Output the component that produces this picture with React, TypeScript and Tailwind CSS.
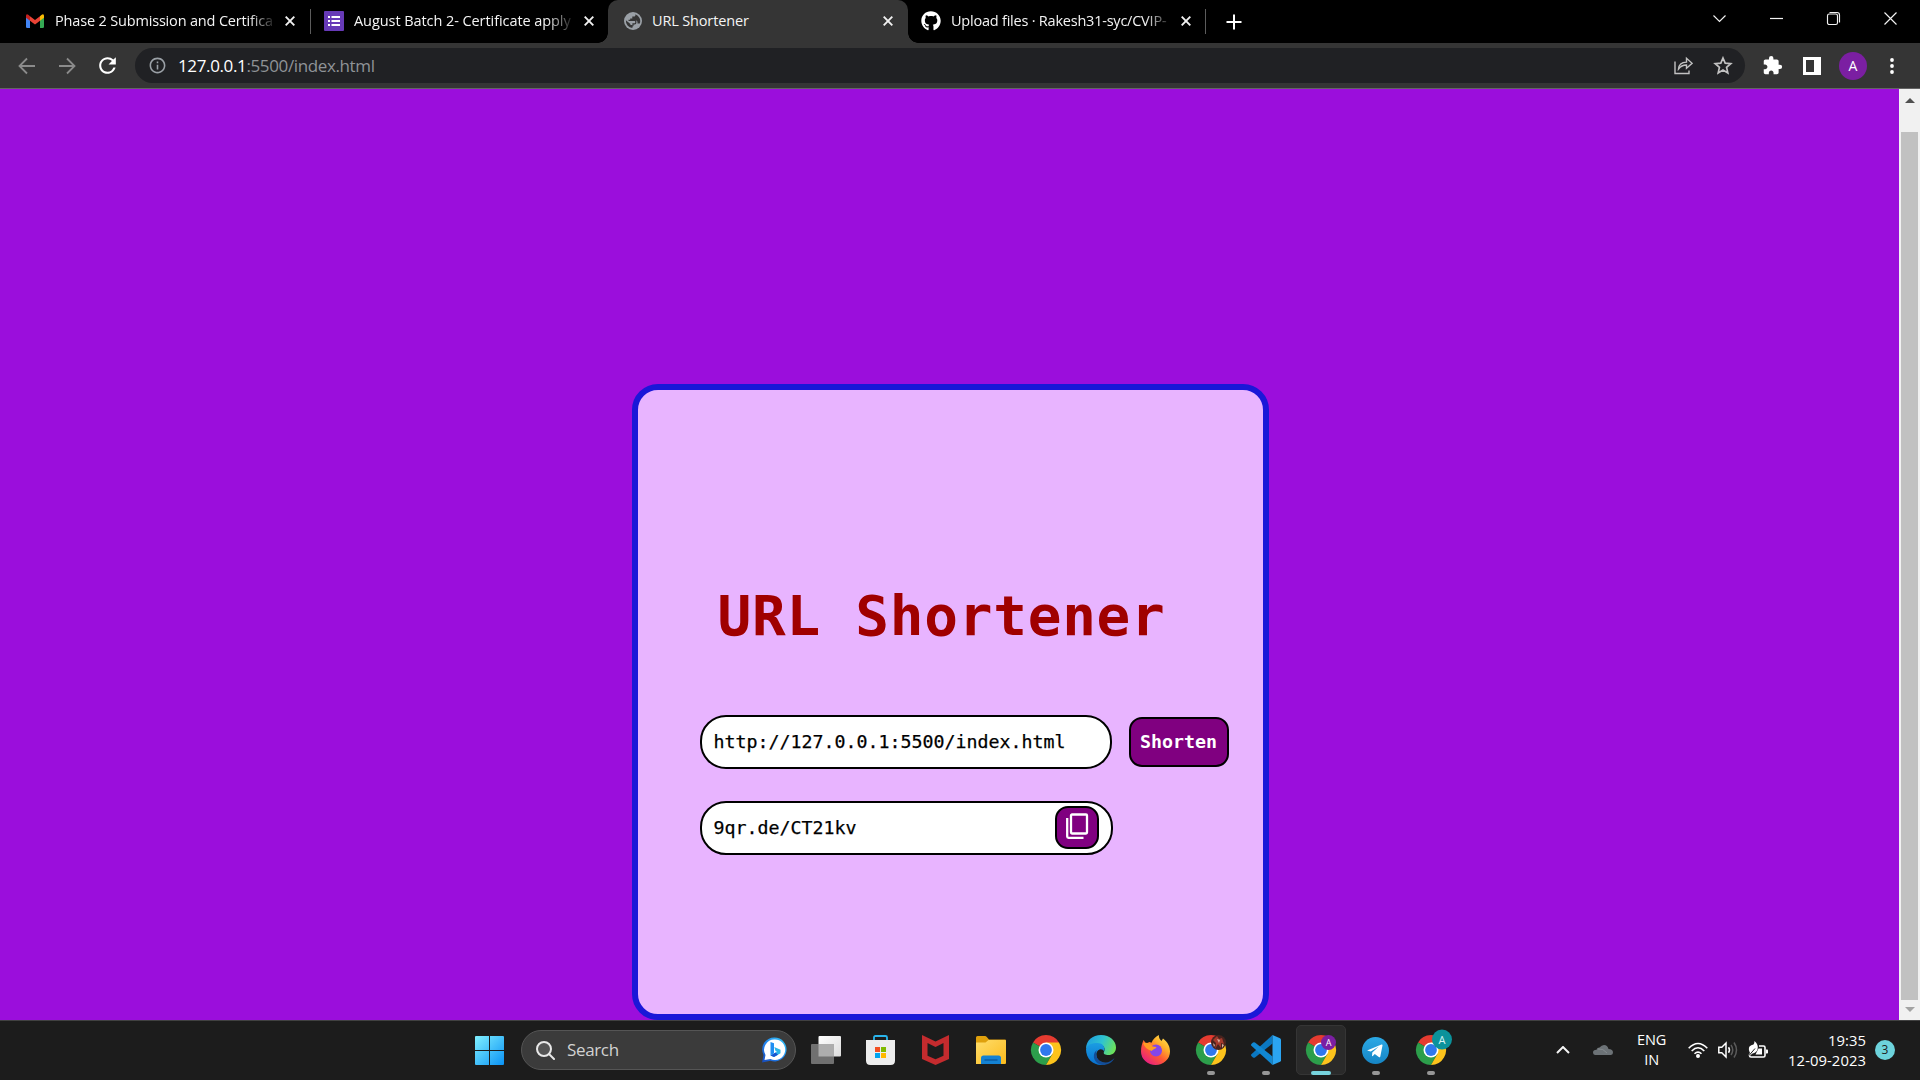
import type { ReactNode } from "react";
import { FaGithub } from "react-icons/fa";
import { MdExtension, MdInfoOutline, MdRefresh } from "react-icons/md";

const MONO = "font-['DejaVu_Sans_Mono',monospace]";
const FADE = "[mask-image:linear-gradient(to_right,black_calc(100%-28px),transparent)]";

function GmailIcon() {
  return (
    <svg width="18" height="14" viewBox="0 0 18 14" className="shrink-0">
      <path d="M0 2v10.8Q0 14 1.2 14H4V5Z" fill="#4285f4" />
      <path d="M18 2v10.8q0 1.2-1.2 1.2H14V5Z" fill="#34a853" />
      <path d="M14 2.2 15.400 .9Q18-.7 18 2v1.800L14 6.800Z" fill="#fbbc04" />
      <path d="M4 2.200 2.600 .9Q0-.7 0 2v1.800L4 6.800Z" fill="#c5221f" />
      <path d="M4 2.200 9 6l5-3.800V6.800L9 10.600 4 6.800Z" fill="#ea4335" />
    </svg>
  );
}

function FormsIcon() {
  return (
    <svg width="20" height="20" viewBox="0 0 20 20" className="shrink-0">
      <rect width="20" height="20" rx="1" fill="#673ab7" />
      <path d="M4 5h2v2H4zM4 9h2v2H4zM4 13h2v2H4zM7.500 5H16v2H7.500zM7.500 9H16v2H7.500zM7.500 13H16v2H7.500z" fill="#fff" />
    </svg>
  );
}

function GlobeIcon() {
  return (
    <svg width="18" height="18" viewBox="0 0 18 18" className="shrink-0">
      <circle cx="9" cy="9" r="9" fill="#9aa0a6" />
      <path d="M11.300 2.200q.5 1.800-.8 2.400H8.300v2H6.200v2H12q1.500 0 1.500 1.600v1.300h2.300A7.200 7.200 0 0 0 11.300 2.200Z" fill="#353535" />
      <path d="M1.900 8.300 6.400 12v1h2v3.100A7.200 7.200 0 0 1 1.900 8.300Z" fill="#353535" />
      <path d="M4.500 8.300h6.300q1 0 1 1.100v1.400q0 1-1 1H9v1.500q0 .8-.9.800" fill="none" stroke="#353535" strokeWidth="1.200" />
    </svg>
  );
}

function Cross() {
  return (
    <svg width="10" height="10" viewBox="0 0 10 10" className="shrink-0">
      <path d="m.7.700 8.600 8.600M9.300.7.700 9.300" stroke="#f1f1f1" strokeWidth="1.900" />
    </svg>
  );
}

function TabStrip() {
  const title = "whitespace-nowrap text-[14.5px] leading-[20px] text-[#f4f4f4]";
  return (
    <div className="flex h-[43px] shrink-0 items-center bg-black">
      <div className="flex h-full w-[310px] items-center pr-[15px] pl-[26px] pb-[2px]">
        <GmailIcon />
        <span className={`${title} ${FADE} ml-[11px] w-[222px] tracking-[-0.17px]`}>Phase 2 Submission and Certifica</span>
        <span className="ml-auto"><Cross /></span>
      </div>
      <div className="mb-[1px] h-[25px] w-px bg-[#5c5c5c]" />
      <div className="flex h-full w-[297px] items-center pr-[14px] pl-[13px] pb-[1px]">
        <FormsIcon />
        <span className={`${title} ${FADE} ml-[10px] w-[221px] tracking-[-0.07px]`}>August Batch 2- Certificate apply</span>
        <span className="ml-auto"><Cross /></span>
      </div>
      <div className="relative flex h-full w-[300px] items-center rounded-t-[10px] bg-[#353535] pr-[15px] pl-[16px] pb-[1px]">
        <span className="absolute bottom-0 -left-[10px] size-[10px] bg-[radial-gradient(circle_at_0_0,transparent_9.5px,#353535_10px)]" />
        <span className="absolute -right-[10px] bottom-0 size-[10px] bg-[radial-gradient(circle_at_100%_0,transparent_9.5px,#353535_10px)]" />
        <GlobeIcon />
        <span className={`${title} ml-[10px] tracking-[-0.15px]`}>URL Shortener</span>
        <span className="ml-auto"><Cross /></span>
      </div>
      <div className="flex h-full w-[297px] items-center pr-[14px] pl-[13px] pb-[1px]">
        <FaGithub size={20} color="#fff" className="shrink-0" />
        <span className={`${title} ${FADE} ml-[10px] w-[222px] tracking-[-0.22px]`}>Upload files · Rakesh31-syc/CVIP-</span>
        <span className="ml-auto"><Cross /></span>
      </div>
      <div className="mb-[1px] h-[25px] w-px bg-[#5c5c5c]" />
      <svg width="16" height="16" viewBox="0 0 16 16" className="ml-[20px]">
        <path d="M8 .5v15M.5 8h15" stroke="#fff" strokeWidth="2" />
      </svg>
      <div className="ml-auto flex h-full items-center pr-[1px] pb-[6px]">
        <WindowButton><path d="m1.500 4.500 6 6 6-6" /></WindowButton>
        <WindowButton><path d="M1 7.500h13" strokeWidth="1.200" /></WindowButton>
        <WindowButton>
          <rect x="1.500" y="3" width="10" height="10.500" rx="1.800" />
          <path d="M3.500 1.500h7.500q2.500 0 2.500 2.500v7.500" />
        </WindowButton>
        <WindowButton><path d="m1.500 1.500 12 12M13.500 1.500l-12 12" /></WindowButton>
      </div>
    </div>
  );
}

function WindowButton({ children }: { children: ReactNode }) {
  return (
    <div className="flex w-[57px] justify-center">
      <svg width="15" height="15" viewBox="0 0 15 15" fill="none" stroke="#f2f2f2" strokeWidth="1.150">{children}</svg>
    </div>
  );
}

function Toolbar() {
  return (
    <div className="flex h-[46px] shrink-0 items-center border-b border-[#646464] bg-[#353535]">
      <svg width="18" height="18" viewBox="0 0 18 18" fill="none" stroke="#8b8b8b" strokeWidth="1.800" className="ml-[18px]">
        <path d="M17 9H2M9 1.500 1.500 9 9 16.500" />
      </svg>
      <svg width="18" height="18" viewBox="0 0 18 18" fill="none" stroke="#8b8b8b" strokeWidth="1.800" className="ml-[22px]">
        <path d="M1 9h15M9 1.500 16.500 9 9 16.500" />
      </svg>
      <MdRefresh size={25} color="#fff" className="ml-[19px]" />
      <div className="ml-[15px] flex h-[35px] w-[1610px] items-center rounded-full bg-[#202124] pr-[11px] pl-[13px]">
        <MdInfoOutline size={19} color="#9aa0a6" />
        <span className="ml-[11px] text-[17px] tracking-[-0.37px] whitespace-nowrap text-[#8f9397]">
          <span className="text-white">127.0.0.1</span>:5500/index.html
        </span>
        <svg width="19" height="19" viewBox="0 0 19 19" fill="none" stroke="#c2c2c2" strokeWidth="1.400" className="ml-auto">
          <path d="M1 5.500v12h14v-3" />
          <path d="M4.500 13c.3-4.500 3-6.700 8-6.900V2.300l5.600 5-5.600 5V9c-3.500 0-6 1.300-8 4Z" />
        </svg>
        <svg width="20" height="19" viewBox="0 0 20 19" fill="none" stroke="#c2c2c2" strokeWidth="1.700" className="mr-[1px] ml-[20px]">
          <path d="m10 2 2.200 5.200 5.600.500-4.250 3.700 1.280 5.500L10 14l-4.830 2.900 1.280-5.500L2.200 7.700l5.600-.5Z" />
        </svg>
      </div>
      <MdExtension size={21} color="#fff" className="ml-[17px]" />
      <svg width="18" height="18" viewBox="0 0 18 18" className="ml-[20px]">
        <path d="M0 0h18v18H0zM3 3v12h8V3z" fill="#fff" fillRule="evenodd" />
      </svg>
      <div className="ml-[18px] flex size-[28px] items-center justify-center rounded-full bg-[#7b1fa2] text-[14px] text-white">A</div>
      <svg width="4" height="16" viewBox="0 0 4 16" className="ml-[23px]" fill="#fff">
        <circle cx="2" cy="2" r="1.900" /><circle cx="2" cy="8" r="1.900" /><circle cx="2" cy="14" r="1.900" />
      </svg>
    </div>
  );
}

function Scrollbar() {
  return (
    <div className="flex w-[21px] shrink-0 flex-col items-center bg-[#f1f1f1]">
      <svg width="10" height="5" viewBox="0 0 10 5" className="mt-[9px]"><path d="m0 5 5-5 5 5Z" fill="#505050" /></svg>
      <div className="mt-[29px] h-[868px] w-[17px] bg-[#c1c1c1]" />
      <svg width="10" height="5" viewBox="0 0 10 5" className="mt-[7px]"><path d="m0 0 5 5 5-5Z" fill="#a3a3a3" /></svg>
    </div>
  );
}

function ShortenerPage() {
  const field = "flex h-[54px] items-center rounded-[26px] border-2 border-black bg-white pl-[12px] text-[18.27px] text-black [-webkit-text-stroke:0.25px_black]";
  return (
    <main className="flex flex-1 justify-center overflow-hidden bg-[#9b0edc] pt-[294.500px] pl-[1px]">
      <section className={`${MONO} flex h-[636.500px] w-[637px] flex-col rounded-[26px] border-[6px] border-[#1a17d8] bg-[#e8b4ff]`}>
        <h1 className="mt-[190px] ml-[80px] text-[56px] leading-[72px] font-bold tracking-[0.75px] whitespace-nowrap text-[#a00000]">URL Shortener</h1>
        <div className="mt-[63px] ml-[62px] flex items-center">
          <div className={`${field} w-[412px]`}>http://127.0.0.1:5500/index.html</div>
          <button className="ml-[17px] h-[50px] w-[100px] rounded-[13px] border-2 border-black bg-[#800080] text-[18.27px] font-bold text-white">Shorten</button>
        </div>
        <div className={`${field} mt-[32px] ml-[62px] w-[413px] justify-between pr-[12px]`}>
          <span>9qr.de/CT21kv</span>
          <button className="flex h-[43px] w-[44px] items-center justify-center rounded-[13px] border-2 border-black bg-[#800080] pb-[3px]">
            <svg width="24" height="26" viewBox="0 0 24 26" fill="none" stroke="#fff" strokeWidth="2.300">
              <rect x="6" y="1.500" width="16" height="19" rx="1" />
              <path d="M2.200 5v18.500q0 1.300 1.300 1.300H18.500" />
            </svg>
          </button>
        </div>
      </section>
    </main>
  );
}

function Chrome({ children }: { children?: ReactNode }) {
  return (
    <svg width="30" height="30" viewBox="0 0 30 30" overflow="visible">
      <path d="M15 15 2 7.500A15 15 0 0 1 28 7.500Z" fill="#e53b30" />
      <path d="M15 15 2 7.500A15 15 0 0 0 15 30l6.500-11.250Z" fill="#2c9e4b" />
      <path d="M15 15V7.500h13A15 15 0 0 1 15 30l6.500-11.250Z" fill="#fcc31c" />
      <circle cx="15" cy="15" r="7.500" fill="#fff" />
      <circle cx="15" cy="15" r="5.900" fill="#2f78ed" />
      {children}
    </svg>
  );
}

function TaskItem({ children, mark = "none" }: { children: ReactNode; mark?: "none" | "running" | "active" }) {
  return (
    <div className="flex h-full w-[55px] items-center justify-center">
      <div className={`relative flex h-[50px] w-[50px] items-center justify-center rounded-[5px] ${mark === "active" ? "border border-[#353535] bg-[#2a2a2a]" : ""}`}>
        {children}
        {mark === "running" && <span className="absolute bottom-0 h-[4px] w-[8px] rounded-full bg-[#969696]" />}
        {mark === "active" && <span className="absolute -bottom-[1px] h-[4px] w-[20px] rounded-full bg-[#76d3dd]" />}
      </div>
    </div>
  );
}

function Taskbar() {
  return (
    <footer className="flex h-[60px] shrink-0 items-center border-t border-[#414141] bg-[#1c1c1c] pb-[1px] text-white">
      <svg width="29" height="29" viewBox="0 0 29 29" className="ml-[475px]">
        <defs>
          <linearGradient id="win" x1="0" y1="0" x2="29" y2="29" gradientUnits="userSpaceOnUse"><stop stopColor="#80f0ff" /><stop offset="1" stopColor="#0a92f5" /></linearGradient>
        </defs>
        <path d="M0 1q0-1 1-1h13v14H0zM15 0h13q1 0 1 1v13H15zM0 15h14v14H1q-1 0-1-1zM15 15h14v13q0 1-1 1H15z" fill="url(#win)" />
      </svg>
      <div className="ml-[17px] flex h-[40px] w-[275px] items-center rounded-full border border-[#555] bg-[#3b3b3b] pr-[8px] pl-[14px]">
        <svg width="19" height="19" viewBox="0 0 19 19" fill="none" stroke="#e8e8e8" strokeWidth="2">
          <circle cx="8" cy="8" r="7" fill="#555" /><path d="m13 13 5 5" strokeLinecap="round" />
        </svg>
        <span className="ml-[12px] text-[17px] tracking-[-0.35px] text-[#d2d2d2]">Search</span>
        <svg width="25" height="26" viewBox="0 0 25 26" className="ml-auto">
          <defs>
            <linearGradient id="bubble" x1="0" y1="1" x2="1" y2="0"><stop stopColor="#1748b8" /><stop offset=".45" stopColor="#2183ef" /><stop offset="1" stopColor="#35c8f4" /></linearGradient>
          </defs>
          <path d="M12.500.5a12 12 0 1 1-4 23.300L0 25.500 1.500 18A12 12 0 0 1 12.500.5Z" fill="url(#bubble)" />
          <path d="M12.500 2.500a10.300 10.300 0 1 1-4 19.600L2.500 23 3.500 18a10.300 10.300 0 0 1 9-15.500Z" fill="#fff" />
          <path d="m8.500 5 3.500 1.300v10l-3.500 2.200Z" fill="#1f8ef2" />
          <path d="m12.300 10 6.200 2.700v3.600L12 20l-3.500-1.500 6.500-3.700-1.500-.7Z" fill="#2bb5e8" />
          <path d="m8.500 18.500 5-3 2.500 2.300L12 20Z" fill="#1754d1" />
        </svg>
      </div>
      <div className="ml-[2px] flex h-full">
        <TaskItem>
          <svg width="30" height="30" viewBox="0 0 30 30">
            <defs><linearGradient id="pane" x2="1" y2="1"><stop stopColor="#fff" /><stop offset="1" stopColor="#dcdcdc" /></linearGradient></defs>
            <rect x="7.500" y="1" width="22.500" height="20.500" rx="1" fill="url(#pane)" />
            <rect x="0" y="9" width="23" height="20" rx="1" fill="#707070" />
            <path d="M7.500 9H23v12.500H7.500z" fill="#adadad" />
          </svg>
        </TaskItem>
        <TaskItem>
          <svg width="29" height="30" viewBox="0 0 29 30">
            <path d="M8 6V2.500Q8 1 9.500 1h10Q21 1 21 2.500V6" fill="none" stroke="#29b5ec" strokeWidth="1.800" />
            <path d="M0 5h29v20.500Q29 30 24.500 30h-20Q0 30 0 25.500Z" fill="#ededed" />
            <path d="M9 12h5v5H9z" fill="#f25022" /><path d="M15 12h5v5h-5z" fill="#7fba00" />
            <path d="M9 18h5v5H9z" fill="#00a4ef" /><path d="M15 18h5v5h-5z" fill="#ffb900" />
          </svg>
        </TaskItem>
        <TaskItem>
          <svg width="27" height="30" viewBox="0 0 27 30">
            <path d="m0 0 13.500 6.500L27 0v24l-13.500 6L0 24ZM5.500 8v12.700l8 3.600 8-3.600V8l-8 4Z" fill="#c42b2e" fillRule="evenodd" />
          </svg>
        </TaskItem>
        <TaskItem>
          <svg width="30" height="28" viewBox="0 0 30 28">
            <defs><linearGradient id="folder" x2="1" y2="1"><stop stopColor="#ffdd6b" /><stop offset="1" stopColor="#fbbb1c" /></linearGradient></defs>
            <path d="M0 1.500Q0 0 1.500 0H9q1 0 1.800 1L13 3.500H29q1 0 1 1V14H0Z" fill="#dfa00c" />
            <path d="M0 6.500h9.500L12.500 4H29q1 0 1 1v22q0 1-1 1H0Z" fill="url(#folder)" />
            <path d="M5 28v-6q0-2.500 2.500-2.500h15q2.500 0 2.500 2.500v6Z" fill="#1482d3" />
            <path d="M8.500 24h13" stroke="#0a559b" strokeWidth="1.300" />
          </svg>
        </TaskItem>
        <TaskItem><Chrome /></TaskItem>
        <TaskItem>
          <svg width="30" height="30" viewBox="0 0 30 30">
            <defs>
              <linearGradient id="edgeTop" y1=".3" x2="1" y2=".6"><stop stopColor="#1e9fe0" /><stop offset=".5" stopColor="#2fc3d0" /><stop offset="1" stopColor="#6ee257" /></linearGradient>
              <linearGradient id="edgeSide" x2="0" y2="1"><stop stopColor="#1b9de2" /><stop offset="1" stopColor="#0870cf" /></linearGradient>
            </defs>
            <path d="M0 14C0 5.500 6.500 0 15 0c9 0 15 6 15 12.500 0 5-3.500 7.500-7.500 7.500-3.500 0-5.500-1.300-4.500-3 2-4-1-8-6-8C6 9 1.500 11 0 14Z" fill="url(#edgeTop)" />
            <path d="M0 14c1.500-4.500 6-6 11.500-6 5.500 0 8 4.500 6.500 8.500-1-3.500-6.500-3-7.500 1.500-1 6 4 11 9 11.300C10 32 0 26 0 14Z" fill="url(#edgeSide)" />
            <path d="M11.500 15c-2 1-2.500 7 2 10.500 5 3.500 11 2 15-2.500-2 4.500-7 7-12 7-6-.5-9.500-6-8.500-10.500.5-2.500 2-4 3.500-4.500Z" fill="#134e98" />
          </svg>
        </TaskItem>
        <TaskItem>
          <svg width="29" height="30" viewBox="0 0 29 30">
            <defs>
              <linearGradient id="fox" x1="1" x2=".2" y2="1"><stop stopColor="#fff25a" /><stop offset=".35" stopColor="#ffb02a" /><stop offset=".62" stopColor="#ff5a32" /><stop offset="1" stopColor="#e5178a" /></linearGradient>
            </defs>
            <path d="M2.500 5 5 8.500 8.500 7l2 .8c1.500-3.500 4-6 7.300-7.800 0 3 1 4.500 2.700 6L22 3.500c5 4 7 8 7 13a14.500 13.500 0 0 1-29 0C0 12 1 8.500 2.500 5Z" fill="url(#fox)" />
            <circle cx="15" cy="15.500" r="6" fill="#8446e8" />
            <path d="M2 8c5-1 8 1 9.500 3.500l4 .5c-1 2.500-4 2-4.500 4-4-1-7-3-9-8Z" fill="#ff9b24" />
          </svg>
        </TaskItem>
        <TaskItem mark="running">
          <Chrome>
            <circle cx="22.500" cy="7.500" r="7.500" fill="#47231e" />
            <path d="m17 5 4-4 2 3 3-1 2 6-3-1v5l-3-4-3 5 1-6Z" fill="#a43a2c" />
            <path d="m21 4 3 1-1 3zM17 8l2 2-1 2zM26 9l2 1-2 3z" fill="#d9b2a0" />
          </Chrome>
        </TaskItem>
        <TaskItem mark="running">
          <svg width="30" height="30" viewBox="0 0 30 30">
            <path d="M21.500 0v8.500L4 22.500q-1 .7-2 0L.4 21q-.8-.9 0-1.800Z" fill="#0b78c2" />
            <path d="M21.500 30v-8.500L4 7.500q-1-.7-2 0L.4 9q-.8.900 0 1.800Z" fill="#1188d3" />
            <path d="M21.500 0 29 3.300q1 .5 1 1.500v20.400q0 1-1 1.500L21.500 30Z" fill="#2ba5f2" />
          </svg>
        </TaskItem>
        <TaskItem mark="active">
          <Chrome>
            <circle cx="22.500" cy="7.500" r="7.500" fill="#7b1fa2" />
            <text x="22.500" y="11" fontSize="9" fill="#fff" textAnchor="middle">A</text>
          </Chrome>
        </TaskItem>
        <TaskItem mark="running">
          <svg width="27" height="27" viewBox="0 0 27 27">
            <defs><linearGradient id="plane" x2="0" y2="1"><stop stopColor="#2ba9e6" /><stop offset="1" stopColor="#1685c5" /></linearGradient></defs>
            <circle cx="13.500" cy="13.500" r="13.500" fill="url(#plane)" />
            <path d="M5 13.500 19.500 7.500q1.200-.3 1 1L18.300 19.500q-.4 1.300-1.500.6l-4-3-2 2-.8.100.3-3.700 6.500-6-8 5-3.700-1.100Z" fill="#fff" />
          </svg>
        </TaskItem>
        <TaskItem mark="running">
          <Chrome>
            <circle cx="26" cy="4.500" r="10" fill="#0b929b" />
            <text x="26" y="8.500" fontSize="11" fill="#d8f3f4" textAnchor="middle">A</text>
          </Chrome>
        </TaskItem>
      </div>
      <div className="ml-auto flex h-full items-center pr-[25px]">
        <svg width="14" height="8" viewBox="0 0 14 8" fill="none" stroke="#f4f4f4" strokeWidth="2"><path d="m1 7 6-6 6 6" /></svg>
        <svg width="20" height="10" viewBox="0 0 20 10" className="ml-[23px]">
          <path d="M2 10Q0 9.500 0 7.500 0 5 3.500 4.800 4 2.500 6.500 2.500 8.500 0 11 0q3.500 0 4.500 4 4.500 0 4.500 3.500 0 2-2 2.500Z" fill="#6c7276" />
          <path d="M5 4q5-1 9 4" stroke="#858b8f" fill="none" />
        </svg>
        <div className="ml-[22px] w-[33px] text-center text-[14.5px] leading-[20px] tracking-[-0.2px]">ENG<br />IN</div>
        <svg width="20" height="16" viewBox="0 0 20 16" fill="none" stroke="#fff" strokeWidth="1.600" className="ml-[20px]">
          <path d="M.7 6.200q9.300-9.500 18.600 0M3.700 9q6.300-6.500 12.600 0M6.500 11.800q3.500-3.500 7 0" /><circle cx="10" cy="14" r="1.200" fill="#fff" />
        </svg>
        <svg width="20" height="18" viewBox="0 0 20 18" fill="none" stroke="#fff" strokeWidth="1.500" className="ml-[10px]">
          <path d="M.8 6.200h3L8 2v14L3.800 11.800h-3Z" /><path d="M10.500 6.300q2 2.700 0 5.400" />
          <path d="M13 4q3.500 5 0 10M16 1.500q5 7.500 0 15" stroke="#5b5b5b" />
        </svg>
        <svg width="20" height="18" viewBox="0 0 20 18" className="ml-[10px]">
          <path d="M11 5h4.500Q17 5 17 6.500v8q0 1.500-1.500 1.500H3q-1.500 0-1.500-1.500V14" fill="none" stroke="#fff" strokeWidth="1.600" />
          <path d="M18 8.500h1.200q.8 0 .8.800v2.400q0 .8-.8.800H18Z" fill="#fff" />
          <path d="M6.500 0q4.500 4 3 8.500-1 3-5 4L1.500 15 .5 14 2 12Q0 8 1.500 5.500 3 4 5.500 3.500 6.500 2.500 6.500 0Z" fill="#fff" />
          <path d="M10.500 7.500h3.500v6H7.500Z" fill="#fff" />
          <path d="m1 14.500 6-7" stroke="#1c1c1c" />
        </svg>
        <div className="ml-[20px] text-right text-[14.800px] leading-[20px] tracking-[0.07px] whitespace-nowrap">19:35<br />12-09-2023</div>
        <div className="ml-[9px] flex size-[20px] items-center justify-center rounded-full bg-[#6dd3dc] text-[12px] text-[#202020]">3</div>
      </div>
    </footer>
  );
}

export default function App() {
  return (
    <div className="flex h-screen w-screen flex-col overflow-hidden font-['Open_Sans','Noto_Sans',sans-serif]">
      <TabStrip />
      <Toolbar />
      <div className="flex min-h-0 flex-1">
        <ShortenerPage />
        <Scrollbar />
      </div>
      <Taskbar />
    </div>
  );
}
